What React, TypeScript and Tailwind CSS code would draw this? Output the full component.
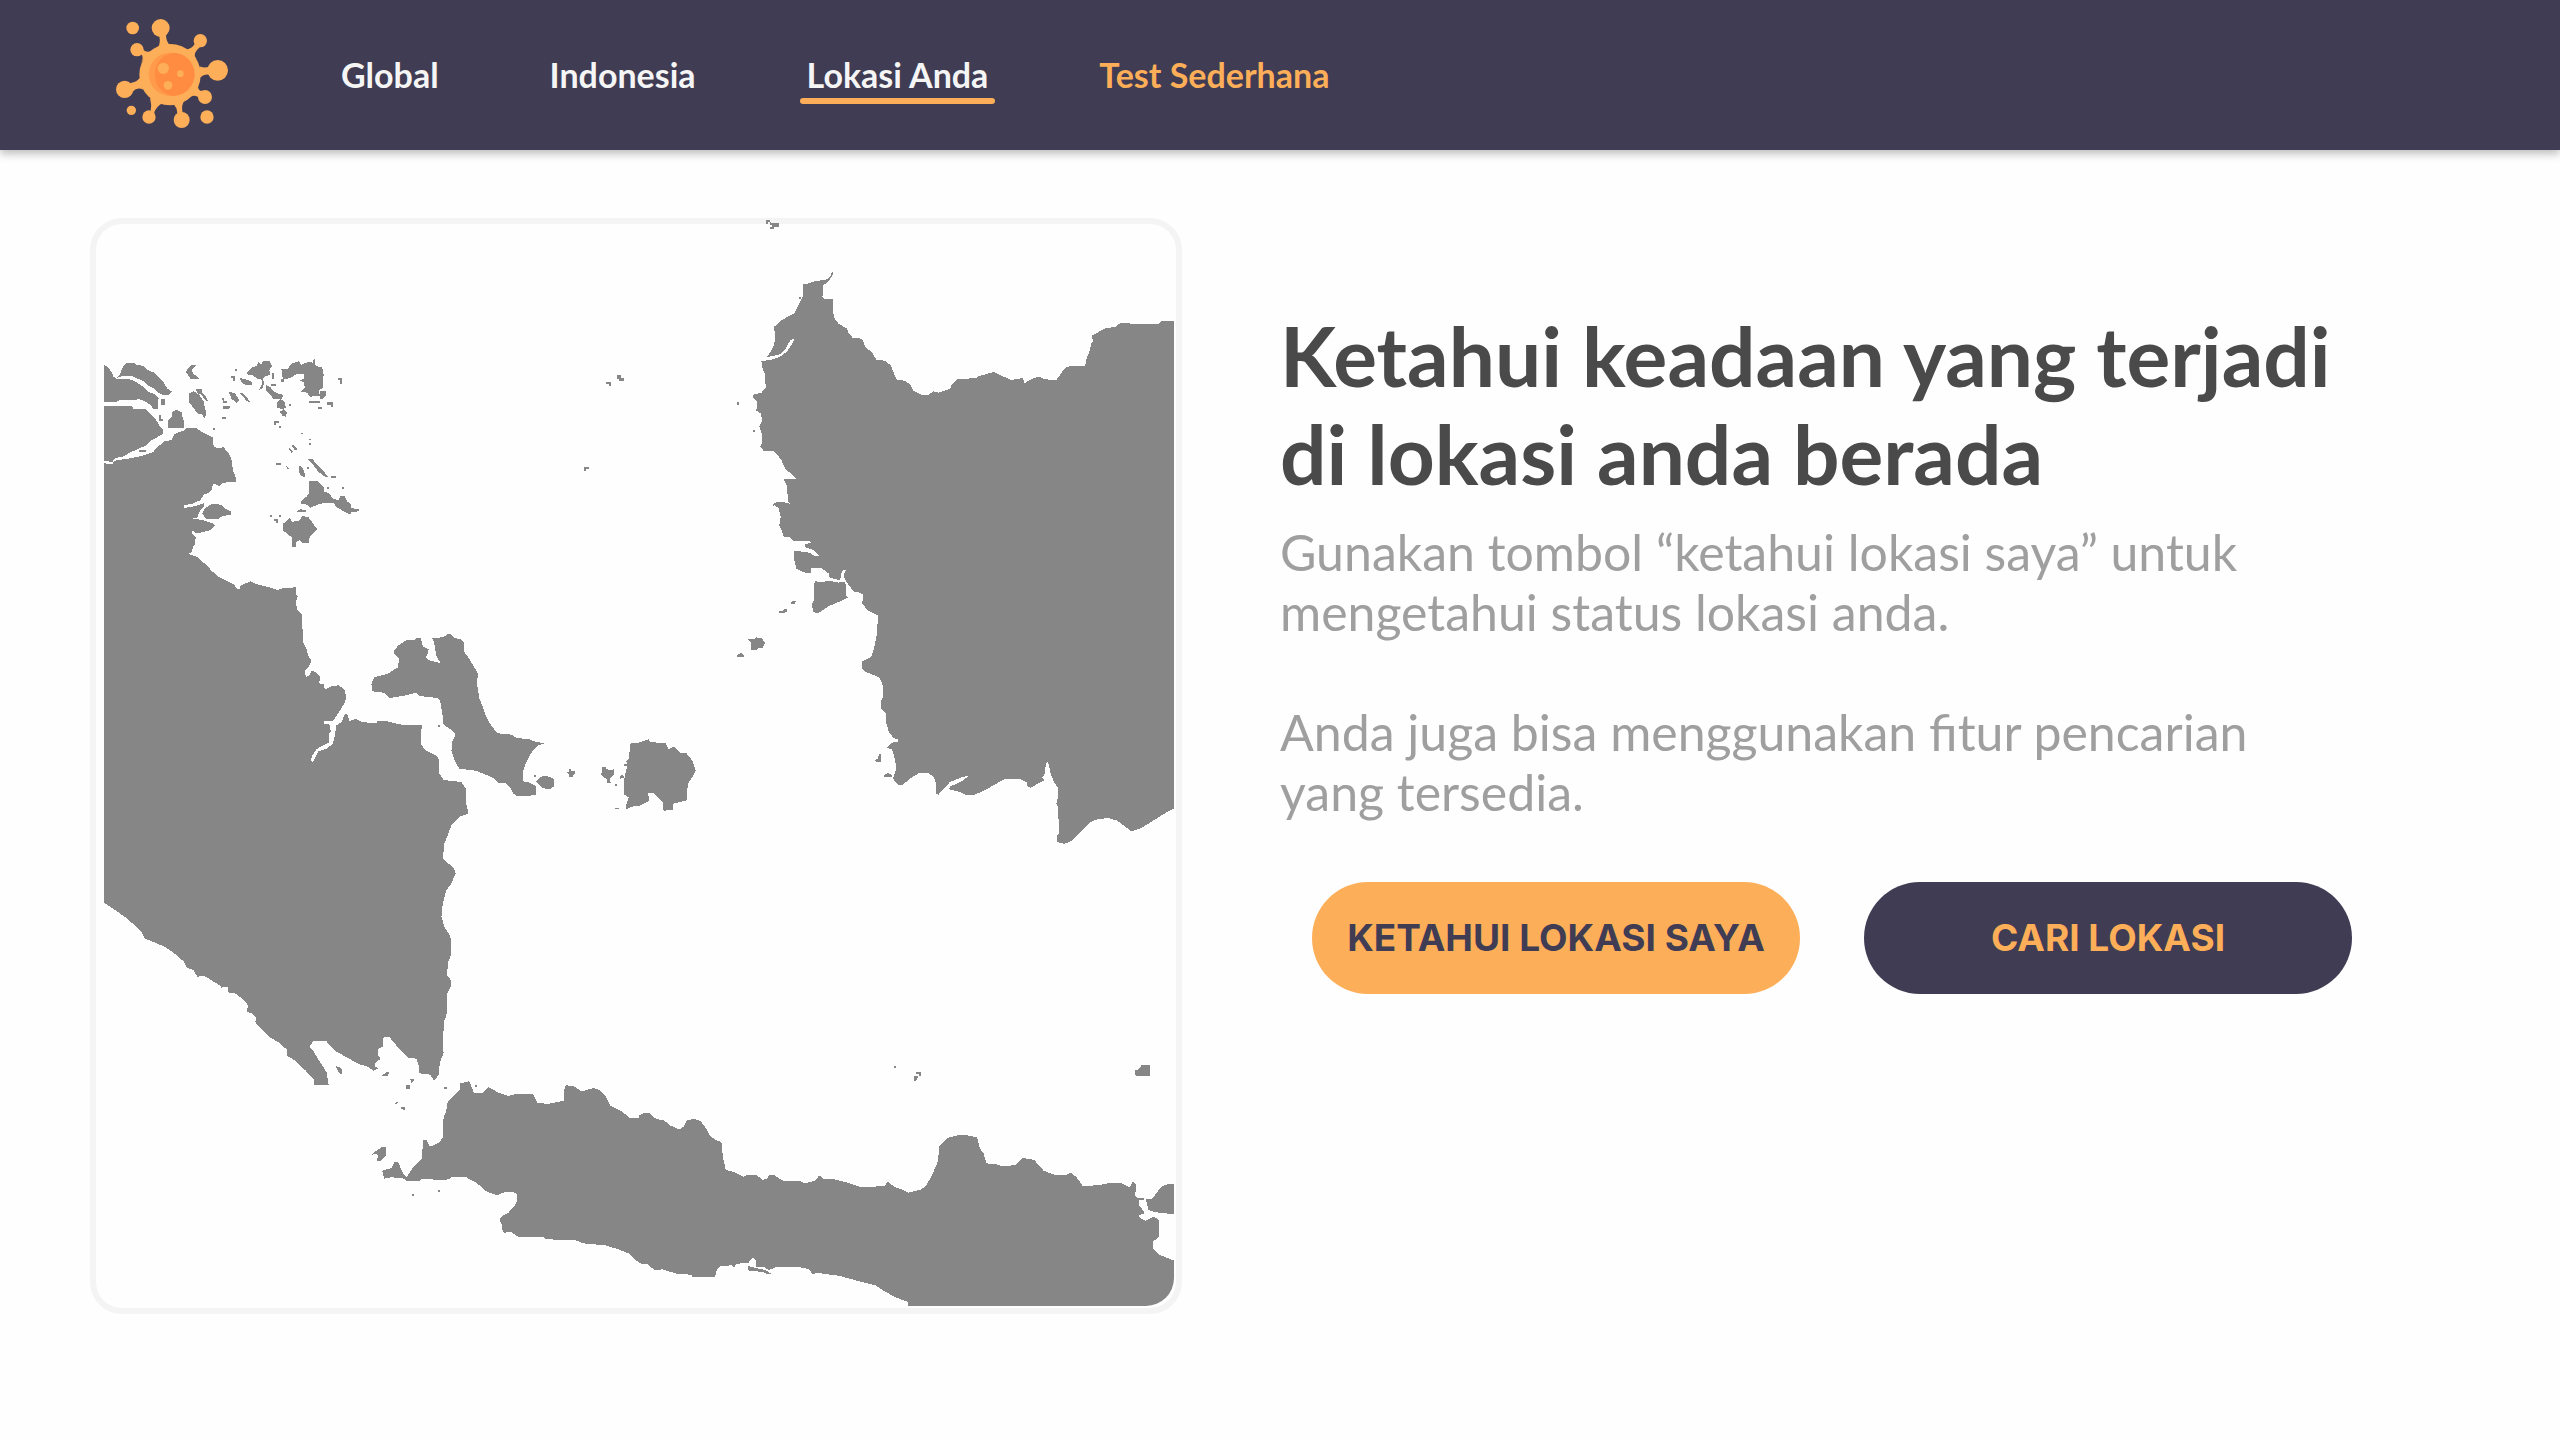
const navLinks = [
  { label: "Global", href: "#global" },
  { label: "Indonesia", href: "#indonesia" },
  { label: "Lokasi Anda", href: "#lokasi", active: true },
  { label: "Test Sederhana", href: "#test", accent: true },
];

function VirusLogo() {
  return (
    <svg viewBox="48 60 336 330" className="h-[110px] w-28" aria-hidden="true">
      <g fill="#fcae58">
        <circle cx="210" cy="227" r="92" />
        <circle cx="98" cy="87" r="19" />
        <circle cx="182" cy="87" r="27" />
        <circle cx="111" cy="152" r="20" />
        <circle cx="301" cy="125" r="20" />
        <circle cx="353" cy="214" r="31" />
        <circle cx="74" cy="271" r="26" />
        <circle cx="94" cy="334" r="14" />
        <circle cx="147" cy="354" r="20" />
        <circle cx="245" cy="363" r="24" />
        <circle cx="315" cy="294" r="21" />
        <circle cx="321" cy="354" r="20" />
        <path d="M177 108 Q183 130 174 146 L212 140 Q198 130 198 108Z" />
        <path d="M124 166 Q132 175 124 190 L158 152 Q144 164 129 152Z" />
        <path d="M286 132 Q276 150 256 152 L288 178 Q276 164 300 144Z" />
        <path d="M328 203 Q310 208 298 202 L300 236 Q312 224 328 227Z" />
        <path d="M92 252 Q110 250 122 234 L130 272 Q112 262 98 278Z" />
        <path d="M152 338 Q156 318 150 296 L190 312 Q170 320 162 342Z" />
        <path d="M232 344 Q232 324 216 312 L256 300 Q242 318 248 342Z" />
        <path d="M304 306 Q292 286 274 292 L294 262 Q294 278 310 276Z" />
      </g>
      <circle cx="211" cy="226" r="65" fill="#ff9b4b" />
      <path d="M219 161 A65 65 0 0 1 219 291 Q165 278 165 226 Q165 174 219 161Z" fill="#ff8c40" />
      <g fill="#fcae58">
        <circle cx="190" cy="208" r="17" />
        <circle cx="241" cy="224" r="10" />
        <circle cx="204" cy="259" r="13" />
      </g>
    </svg>
  );
}

function RegionMap() {
  return (
    <svg
      viewBox="104 218 1070 1088"
      role="img"
      aria-label="Peta lokasi"
      shapeRendering="crispEdges"
      className="block h-auto w-full rounded-br-[28px]"
      fill="#868686"
    >
      {/* Riau and the northern islands */}
      <g transform="translate(80 200) scale(0.357143 0.333333)">
        <path d="M102 534L112 524 118 504 130 488 150 488 158 494 178 498 188 510 208 518 222 532 236 550 244 566 257 574 248 586 232 584 218 578 206 564 192 558 180 544 162 536 145 528 118 528Z" />
        <path d="M67 493L78 502 90 518 93 530 102 536 140 538 160 548 180 562 192 576 208 582 220 594 218 628 206 628 198 614 180 604 168 598 138 600 110 600 104 605 67 605Z" />
        <path d="M67 618L145 618 150 626 182 626 196 640 212 658 224 680 231 686 231 702 216 712 196 724 182 738 160 748 140 758 120 770 100 774 90 786 67 782Z" />
        <path d="M67 790L90 792 98 782 120 778 146 774 180 766 205 756 214 744 236 724 256 720 264 702 290 692 298 684 326 684 338 694 356 704 372 712 374 738 384 744 402 742 418 762 426 786 428 812 438 836 438 846 400 848 390 858 372 850 370 866 362 878 346 884 338 900 318 910 290 916 292 924 316 920 346 910 348 918 338 930 328 952 308 958 332 958 350 962 372 970 378 978 366 990 346 996 326 1000 316 992 312 992 316 1004 324 1010 322 1034 316 1040 314 1056 304 1062 330 1072 340 1084 352 1092 366 1110 390 1132 412 1146 432 1154 440 1168 446 1168 450 1158 478 1144 492 1152 530 1162 552 1170 572 1164 606 1162 606 1200 67 1200Z" />
        <path d="M342 940L350 924 370 912 395 914 404 924 424 936 424 944 400 948 385 958 352 956Z" />
        <path d="M246 684L246 660 256 654 258 636 270 630 284 636 288 654 292 668 290 684Z" />
        <path d="M324 496L314 508 316 522 326 528 334 538 310 538 300 520 295 516 304 504 310 496Z" />
        <path d="M306 580L318 574 334 584 346 604 350 626 354 640 348 656 342 642 328 640 318 624 306 608Z" />
        <path d="M324 568L342 568 342 578 352 590 360 604 350 600 340 584 330 580Z" />
        <path d="M424 528H434V544H428V534H424ZM434 507H440V513H434ZM226 596H238V616H228ZM220 646H226V656H232V662H220ZM166 750H184V756H166Z" />
        <path d="M446 534L464 538 482 546 482 556 464 556 452 546Z" />
        <path d="M466 518L480 504 496 496 500 486 508 494 512 482 530 482 538 498 530 510 532 524 516 530 512 540 496 536 484 526 474 526Z" />
        <path d="M510 540L516 544 512 564 502 570 508 556ZM538 520H544V538H538ZM536 552H550V557H536Z" />
        <path d="M520 554L534 562 540 572 552 580 568 584 566 596 540 598 536 586 522 574Z" />
        <path d="M552 606L562 598 574 606 576 624 566 628 550 622Z" />
        <path d="M558 636L570 628 580 638 576 650 568 648ZM564 538H570V545H564ZM586 611H592V617H586Z" />
        <path d="M564 508L580 508 594 490 612 484 620 494 640 486 652 488 656 474 660 498 678 502 682 524 680 564 668 572 672 588 644 590 636 578 618 576 630 564 626 546 616 542 628 536 626 522 606 522 590 534 568 538Z" />
        <path d="M672 574H690V584L680 596H672ZM642 602H672V608H642ZM692 606H709V622H703V616H692ZM666 620H678V628H666ZM722 534H734V551H728V541H722Z" />
        <path d="M416 574L434 580 446 600 438 608 424 596ZM446 576L458 582 478 606 468 604 456 590ZM398 594H404V604H412V608H400ZM400 618H420V624L410 628H400ZM398 652H410V657H398ZM544 664H556V670H550V676H544ZM556 678H562V683H556ZM372 684H378V690H372ZM618 698H624V703H618ZM642 716H648V721H642ZM642 730H648V735H642Z" />
        <path d="M592 732L602 738 608 748 602 752 596 742ZM582 742L590 746 596 754 592 758ZM550 790H562V795H550ZM574 796L586 804 582 808ZM636 776L650 776 664 794 684 816 696 832 686 830 668 816 654 796ZM704 828H716V834H704ZM692 860H698V866H692ZM734 860H740V866H734ZM612 796L620 800 628 814 630 832 620 828 612 814ZM636 802H642V808H636Z" />
        <path d="M642 844L664 842 676 854 684 862 682 874 698 880 708 896 724 900 730 888 740 888 748 904 758 912 760 924 780 928 780 934 760 936 756 944 742 936 720 922 708 908 688 908 666 914 644 924 638 914 618 912 618 904 634 890 642 880Z" />
        <path d="M606 936L616 928 634 930 634 937ZM532 946H538V951H532ZM556 946H562V951H556ZM544 958H554V970H548V964H544Z" />
        <path d="M568 972L588 954 594 966 612 962 624 948 640 952 650 966 656 976 664 988 654 1000 644 1008 640 1028 624 1030 616 1020 606 1026 604 1042 594 1042 594 1014 580 1000 568 992Z" />
        <path d="M1474 546H1486V557H1480V552H1474ZM1504 526H1516V534H1522V544H1510V536H1504ZM1412 802H1424V808H1418V814H1412Z" />
      </g>

      {/* West Kalimantan */}
      <g transform="translate(640 200) scale(0.357143 0.333333)">
        <path d="M352 61H364V67H358V73H352ZM364 67L376 69H388V80H376V86H364V80H370V74H364Z" />
        <path d="M538 212L541 222 530 240 512 258 511 290 516 298 541 298 542 350 556 372 578 384 584 398 596 414 622 416 630 440 650 458 662 480 686 482 702 496 718 538 740 542 756 552 766 572 788 584 808 584 822 574 836 578 868 566 874 552 888 538 940 534 950 528 990 516 1010 526 1040 540 1072 534 1076 550 1090 540 1116 530 1134 538 1166 540 1190 504 1204 498 1246 498 1252 470 1258 456 1264 430 1270 424 1264 408 1300 386 1332 380 1344 370 1452 372 1460 364 1500 364 1500 1202 626 1202 626 1184 598 1170 578 1146 570 1128 576 1110 566 1112 560 1140 548 1138 530 1132 528 1120 508 1104 480 1104 480 1120 466 1120 438 1106 432 1080 432 1052 474 1058 490 1068 502 1068 486 1050 462 1042 462 1034 478 1028 474 1022 430 1022 418 1010 402 1010 396 990 390 976 394 950 388 924 376 916 372 922 374 912 384 906 414 908 420 912 414 904 412 858 402 836 418 838 440 838 424 822 406 806 396 780 376 754 346 752 336 740 342 730 342 706 334 680 342 662 338 640 322 630 328 626 328 604 318 596 316 584 340 578 352 564 350 520 344 512 340 484 372 478 396 468 412 454 428 428 432 416 420 422 406 450 390 464 354 472 366 456 374 438 378 420 376 380 392 364 414 350 432 340 446 310 456 290 456 252 476 250 480 246 524 238 534 228Z" />
        <path d="M272 605H278V616H272ZM316 690H322V696H316ZM444 290H450V297H444Z" />
      </g>

      {/* Sumatra, Bangka and Belitung */}
      <g transform="translate(80 560) scale(0.357143 0.333333)">
        <path d="M67 -5L334 -5 346 12 356 16 366 30 390 52 412 64 432 74 440 88 446 88 450 76 478 64 492 72 530 82 552 92 572 84 606 82 606 104 610 110 604 124 608 150 622 164 624 244 634 266 640 290 648 302 638 324 630 332 632 350 642 348 648 332 660 336 672 350 670 370 682 372 686 388 706 378 724 376 740 388 746 410 742 426 730 448 712 478 704 484 682 484 684 492 700 494 702 516 696 524 696 548 680 556 662 568 650 588 646 602 652 606 660 590 668 574 692 566 708 550 714 524 718 496 732 486 742 462 750 464 754 484 772 476 788 486 830 490 834 482 860 484 900 494 934 496 958 496 954 524 954 550 966 570 1000 588 1006 600 1006 640 1018 660 1068 666 1080 686 1082 734 1088 760 1064 770 1040 796 1030 824 1020 852 1016 896 1046 924 1052 940 1040 970 1026 990 1016 1030 1012 1070 1020 1100 1036 1126 1038 1160 1034 1200 285 1200 262 1178 230 1156 210 1144 180 1134 172 1114 130 1074 90 1044 67 1028Z" />
        <path d="M880 282L880 270 892 256 914 240 936 240 942 234 954 234 960 260 976 268 974 280 968 292 976 300 1010 310 998 288 992 250 986 234 1016 232 1034 220 1050 234 1066 238 1076 248 1076 276 1092 300 1114 340 1112 372 1118 416 1128 440 1136 468 1152 498 1170 520 1208 524 1222 534 1260 538 1270 544 1302 550 1282 556 1266 574 1250 606 1240 634 1242 664 1260 668 1278 680 1276 706 1224 708 1212 700 1206 684 1192 670 1172 668 1154 652 1108 632 1062 626 1048 600 1040 572 1042 546 1052 522 1040 510 1018 494 1014 456 1008 422 1000 414 950 408 940 398 914 406 868 414 850 398 818 394 816 372 824 352 860 342 890 322 894 296Z" />
        <path d="M1276 664L1290 650 1308 648 1326 656 1326 680 1314 688 1294 684ZM1272 645H1278V651H1272ZM1002 494H1008V500H1002Z" />
        <path d="M1370 626H1376V632H1386V638L1380 650H1370V642L1364 640V635H1370Z" />
        <path d="M1462 620H1472V626L1484 630 1496 628V642L1484 656 1486 668 1476 668V658L1462 648 1456 642 1462 636ZM1498 672H1504V678H1498ZM1498 743H1510V748H1498ZM1522 612H1534V618H1522ZM1510 650L1520 644 1524 654 1512 656Z" />
        <path d="M1542 548L1572 548 1572 736 1544 740 1530 748 1530 732 1536 712 1524 704 1524 656 1532 618 1530 604 1536 596Z" />
      </g>

      {/* South-west Kalimantan */}
      <g transform="translate(640 560) scale(0.357143 0.333333)">
        <path d="M-4 548L24 538 30 546 72 550 80 568 96 560 114 580 130 580 148 604 156 632 150 646 134 672 130 722 94 730 92 750 66 752 64 728 48 710 36 698 22 698 26 722 0 736 -4 736Z" />
        <path d="M1500 -5L1500 742 1470 760 1440 780 1404 804 1376 814 1356 798 1336 782 1312 774 1280 778 1258 788 1236 814 1206 844 1188 852 1168 846 1166 830 1174 820 1170 740 1166 730 1170 712 1170 684 1158 664 1150 640 1142 604 1136 614 1134 640 1126 654 1134 660 1118 668 1094 684 1086 680 1082 666 1066 658 1020 658 996 672 960 694 936 704 916 706 890 694 866 688 868 680 900 664 920 648 906 650 868 666 848 688 836 704 830 702 828 666 820 648 808 640 780 640 756 656 734 676 724 676 708 656 718 624 712 590 706 568 690 564 706 548 724 544 722 538 710 534 696 514 690 490 688 460 676 446 676 420 682 406 680 376 670 352 628 334 622 324 622 304 648 290 656 262 664 220 666 166 636 150 622 130 626 100 598 94 578 66 578 30 600 20 600 -5Z" />
        <path d="M486 80L490 64 510 66 530 62 556 68 572 64 578 80 576 104 582 112 560 124 530 138 510 152 496 160 484 154 482 130 486 122Z" />
        <path d="M420 130L428 122 438 122 432 132ZM388 154H398L404 148H412V154L404 160H388Z" />
        <path d="M302 238L320 238 324 232 340 234 350 248 344 264 328 266 326 271 310 271 310 246ZM272 284L284 279 290 284V291H272Z" />
        <path d="M658 600L666 596 670 582 676 580V605H660ZM684 645L694 638 706 646V651H684Z" />
      </g>

      {/* Lampung, Sunda strait and West Java */}
      <g transform="translate(80 940) scale(0.357143 0.333333)">
        <path d="M180 -5L210 8 240 22 264 40 290 64 300 84 318 90 328 110 348 108 370 122 394 138 394 146 400 140 414 142 416 158 434 160 454 176 468 190 470 200 466 216 482 220 494 234 490 246 510 268 532 292 560 310 580 330 578 346 600 360 630 390 654 416 656 434 696 434 690 396 672 366 654 334 642 318 654 304 690 304 714 332 750 354 780 372 806 380 822 392 836 386 826 380 828 366 842 358 834 344 836 326 848 320 850 292 866 290 876 304 900 334 920 354 942 356 948 376 950 400 980 404 992 422 1004 404 1008 366 1018 340 1016 300 1020 240 1026 232 1028 160 1038 140 1038 120 1028 106 1030 70 1038 46 1038 -5Z" />
        <path d="M1064 450L1064 430 1090 424 1096 440 1104 460 1126 460 1144 442 1172 458 1200 468 1222 462 1268 462 1280 488 1310 492 1356 482 1354 456 1360 436 1382 438 1404 454 1440 444 1456 452 1470 466 1486 498 1520 516 1538 534 1572 534 1572 972 1556 960 1536 940 1508 928 1470 916 1410 910 1386 900 1304 898 1300 892 1230 892 1206 876 1188 878 1182 870 1180 850 1174 840 1182 828 1198 820 1222 790 1224 764 1214 756 1190 756 1168 766 1140 756 1112 730 1078 710 1040 710 1036 718 1004 720 960 716 950 722 914 722 902 714 870 712 852 716 846 692 872 684 880 666 892 668 904 700 914 712 934 680 958 654 960 600 970 600 980 620 1006 608 1016 592 1018 534 1026 510 1030 484Z" />
        <path d="M716 378L732 384 734 402 726 400ZM844 408L858 396 868 398 860 408ZM924 416H934V422L928 428ZM912 436H924V447H912ZM1020 442H1027V448H1020ZM1106 436H1112V441H1106ZM880 493L892 482 888 492ZM898 501H910V511H904V506H898ZM930 763H936V769H930ZM1002 750H1009V755H1002Z" />
        <path d="M812 648L832 630 844 622 856 620V646L842 664 832 662 834 644 822 642Z" />
      </g>

      {/* Central and East Java */}
      <g transform="translate(640 940) scale(0.357143 0.333333)">
        <path d="M-4 526L10 520 24 518 44 536 68 542 84 556 110 568 122 560 130 542 152 536 170 544 188 570 196 588 212 600 228 606 232 650 240 690 262 696 290 710 300 704 324 704 344 720 356 716 362 704 376 706 400 722 450 724 460 730 490 722 502 706 512 716 544 718 580 728 620 742 684 738 694 726 712 740 736 750 752 758 788 748 802 736 820 700 834 664 838 620 860 594 890 586 916 586 944 592 952 626 962 640 970 670 1004 674 1012 678 1050 676 1072 654 1104 660 1130 692 1160 704 1194 704 1208 698 1222 712 1240 738 1280 736 1320 728 1350 730 1372 742 1380 724 1390 736 1386 768 1398 776 1398 796 1414 820 1396 826 1402 836 1416 842 1440 830 1452 840 1452 890 1436 906 1436 926 1454 944 1495 962 1500 962 1500 1105 752 1105 750 1086 720 1074 688 1056 660 1036 600 1020 560 1008 494 998 484 1004 474 988 440 980 384 980 362 990 348 982 326 980 324 960 316 952 304 968 268 972 264 984 258 976 226 978 216 988 210 1010 146 1010 144 1004 104 1002 64 988 40 990 20 972 -4 970Z" />
        <path d="M1416 778L1434 776 1460 740 1480 732 1500 732 1500 822 1466 820 1440 816 1424 810ZM1398 775H1410V781H1398Z" />
        <path d="M302 978L324 984 352 990 370 1003 356 1002 344 996 302 991Z" />
        <path d="M712 377H718V383H712ZM774 396H786V408H780V402H774ZM768 409H778V414L772 422H768ZM1386 390L1396 388 1404 376H1428V409H1392L1386 402Z" />
      </g>
    </svg>
  );
}

export default function App() {
  return (
    <div className="min-h-screen bg-[#fefefe] font-['Lato',sans-serif]">
      <header className="flex h-[150px] items-center bg-[#3f3c54] pl-[116px] shadow-[0_4px_8px_rgba(0,0,0,0.25)]">
        <a href="#beranda" aria-label="Beranda" className="pb-0.5">
          <VirusLogo />
        </a>
        <nav className="ml-[106px] flex gap-[97px]">
          {navLinks.map((link) => (
            <a
              key={link.label}
              href={link.href}
              className={`relative px-[7px] text-[34px] leading-[48px] font-bold whitespace-nowrap ${
                link.accent ? "text-[#fcae58]" : "text-[#f5f5f5]"
              }`}
            >
              {link.label}
              {link.active && (
                <span className="absolute inset-x-0 top-[47px] h-1.5 rounded-full bg-[#fcae58]" />
              )}
            </a>
          ))}
        </nav>
      </header>

      <main className="grid grid-cols-2 pt-[68px]">
        <section className="pr-[98px] pl-[90px]">
          <div className="rounded-[32px] pr-2 pb-2 pl-3.5 shadow-[inset_0_0_0_6px_#f4f4f4]">
            <RegionMap />
          </div>
        </section>

        <section className="pt-[88px] pr-[208px]">
          <h1 className="text-[82px] leading-[98px] font-bold whitespace-nowrap text-[#4a4a4a]">
            Ketahui keadaan yang terjadi
            <br />
            di lokasi anda berada
          </h1>
          <div className="mt-5 text-[50px] leading-[60px] whitespace-nowrap text-[#9f9f9f]">
            <p>
              Gunakan tombol “ketahui lokasi saya” untuk
              <br />
              mengetahui status lokasi anda.
            </p>
            <p className="mt-[60px]">
              Anda juga bisa menggunakan fitur pencarian
              <br />
              yang tersedia.
            </p>
          </div>
          <div className="mt-[60px] ml-8 grid grid-cols-2 gap-16 font-['Inter',sans-serif] text-[37px] font-bold whitespace-nowrap">
            <button type="button" className="h-28 rounded-full bg-[#fcae58] text-[#3f3c54]">
              KETAHUI LOKASI SAYA
            </button>
            <button type="button" className="h-28 rounded-full bg-[#3f3c54] text-[#fcae58]">
              CARI LOKASI
            </button>
          </div>
        </section>
      </main>
    </div>
  );
}
